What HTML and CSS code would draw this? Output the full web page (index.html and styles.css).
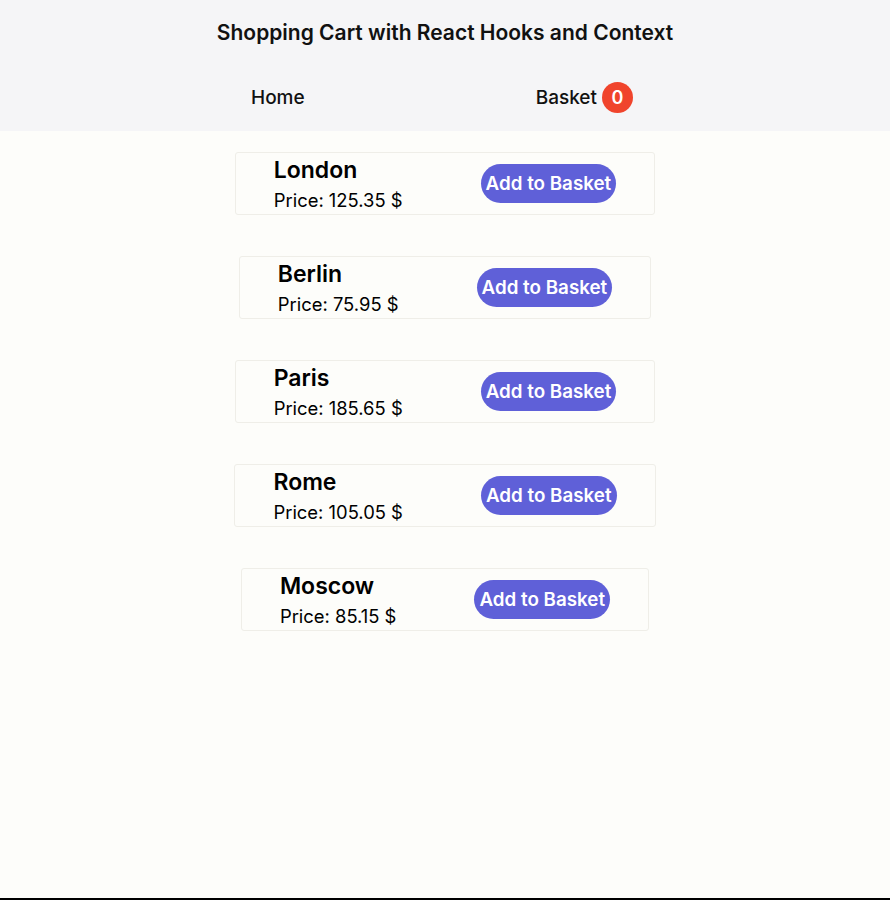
FILE: index.html
```html
<!DOCTYPE html>
<html lang="en">
<head>
<meta charset="utf-8">
<title>Shopping Cart with React Hooks and Context</title>
<link rel="stylesheet" href="styles.css">
</head>
<body>
<div class="page">
  <header class="header">
    <h1 class="title">Shopping Cart with React Hooks and Context</h1>
    <nav class="nav">
      <a class="nav-link" href="#">Home</a>
      <a class="nav-link basket" href="#">Basket <span class="badge">0</span></a>
    </nav>
  </header>
  <main class="list">
    <div class="card">
      <div class="info"><div class="name">London</div><div class="price">Price: 125.35 $</div></div>
      <button class="btn">Add to Basket</button>
    </div>
    <div class="card">
      <div class="info"><div class="name">Berlin</div><div class="price">Price: 75.95 $</div></div>
      <button class="btn">Add to Basket</button>
    </div>
    <div class="card">
      <div class="info"><div class="name">Paris</div><div class="price">Price: 185.65 $</div></div>
      <button class="btn">Add to Basket</button>
    </div>
    <div class="card">
      <div class="info"><div class="name">Rome</div><div class="price">Price: 105.05 $</div></div>
      <button class="btn">Add to Basket</button>
    </div>
    <div class="card">
      <div class="info"><div class="name">Moscow</div><div class="price">Price: 85.15 $</div></div>
      <button class="btn">Add to Basket</button>
    </div>
  </main>
</div>
</body>
</html>
```
FILE: styles.css
```css
* { box-sizing: border-box; }
html, body { margin: 0; padding: 0; }
body {
  background: #fdfdfa;
  font-family: Inter, "Noto Sans", "Liberation Sans", sans-serif;
  color: #111;
}
.page {
  min-height: 900px;
  border-bottom: 2px solid #000;
}
.header {
  background: #f5f5f7;
  height: 131px;
  padding-top: 20px;
}
.title {
  margin: 0;
  text-align: center;
  font-size: 21px;
  line-height: 25px;
  font-weight: 600;
}
.nav {
  width: 382px;
  margin: 37px auto 0;
  position: relative;
  left: -3px;
  display: flex;
  justify-content: space-between;
  align-items: center;
  height: 31px;
}
.nav-link {
  color: #111;
  text-decoration: none;
  font-size: 19px;
  font-weight: 500;
  line-height: 23px;
}
.basket {
  display: flex;
  align-items: center;
  gap: 5px;
}
.badge {
  width: 31px;
  height: 31px;
  border-radius: 50%;
  background: #f0442c;
  color: #fff;
  font-weight: 600;
  font-size: 18px;
  display: flex;
  align-items: center;
  justify-content: center;
}
.list {
  display: flex;
  flex-direction: column;
  align-items: center;
  gap: 41px;
  padding-top: 21px;
}
.card {
  display: flex;
  align-items: center;
  gap: 78px;
  height: 63px;
  padding: 0 38px;
  border: 1px solid #efeee8;
  border-radius: 3px;
}
.info { display: flex; flex-direction: column; }
.name {
  font-size: 23px;
  line-height: 27px;
  font-weight: 600;
  margin-bottom: 5px;
  color: #000;
}
.price {
  font-size: 18.4px;
  line-height: 22px;
  color: #000;
}
.btn {
  font-family: inherit;
  background: #5f60d8;
  color: #fff;
  border: none;
  border-radius: 20px;
  font-size: 18.8px;
  font-weight: 600;
  line-height: 23px;
  padding: 8px 5px;
  cursor: pointer;
}
```
